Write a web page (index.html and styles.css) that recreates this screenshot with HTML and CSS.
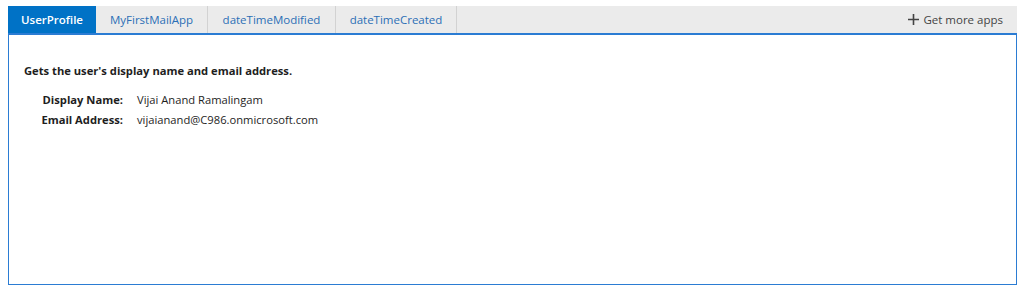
FILE: index.html
```html
<!DOCTYPE html>
<html lang="en">
<head>
  <meta charset="UTF-8" />
  <title>UserProfile</title>
  <link rel="stylesheet" href="styles.css">
</head>
<body>
  <div class="app-frame">
    <div class="tab-bar">
      <ul class="tabs">
        <li class="tab active">UserProfile</li>
        <li class="tab">MyFirstMailApp</li>
        <li class="tab">dateTimeModified</li>
        <li class="tab">dateTimeCreated</li>
      </ul>
      <a class="more-apps" href="#">
        <svg width="11" height="11" viewBox="0 0 11 11"><path d="M5.5 0v11M0 5.5h11" stroke="#444" stroke-width="1.6"/></svg>
        Get more apps
      </a>
    </div>

    <div class="panel">
      <p class="intro">Gets the user's display name and email address.</p>
      <div class="details">
        <span class="label">Display Name:</span>
        <span class="value">Vijai Anand Ramalingam</span>
        <span class="label">Email Address:</span>
        <span class="value">vijaianand@C986.onmicrosoft.com</span>
      </div>
    </div>
  </div>
</body>
</html>
```

FILE: styles.css
```css
body {
  margin: 0;
  font-family: "Open Sans", "Noto Sans", sans-serif;
  font-size: 11.2px;
  color: #1e1e1e;
  background: #fff;
}

.app-frame {
  margin: 6px 7px 0 8px;
}

.tab-bar {
  display: flex;
  justify-content: space-between;
  align-items: stretch;
  height: 27px;
  background-color: #ebebeb;
  font-size: 11.5px;
}

.tabs {
  display: flex;
  list-style: none;
  margin: 0;
  padding: 0;
}

.tab {
  display: flex;
  align-items: center;
  justify-content: center;
  color: #2b6fb6;
  border-right: 1px solid #d2d2d2;
  white-space: nowrap;
}

.tab:nth-child(1) { width: 88px; }
.tab:nth-child(2) { width: 111px; }
.tab:nth-child(3) { width: 127px; }
.tab:nth-child(4) { width: 120px; }

.tab.active {
  background-color: #0072c6;
  color: #fff;
  font-weight: 600;
  border-right: none;
}

.more-apps {
  display: flex;
  align-items: center;
  gap: 4px;
  padding-right: 14px;
  color: #444;
  text-decoration: none;
}

.panel {
  height: 249px;
  border: 1px solid #2b7cd3;
  border-top: 2px solid #2b7cd3;
  padding: 0 15px;
}

.intro {
  margin: 28px 0 0;
  font-weight: 700;
}

.details {
  display: grid;
  grid-template-columns: 99px auto;
  column-gap: 14px;
  row-gap: 5px;
  margin-top: 14px;
  justify-content: start;
}

.label {
  text-align: right;
  font-weight: 700;
}
```
